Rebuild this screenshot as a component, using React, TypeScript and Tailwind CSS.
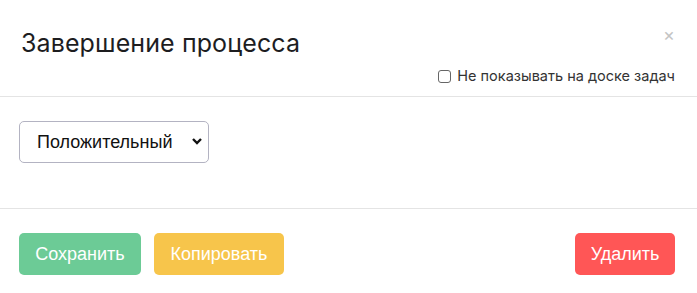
import { useState } from 'react'

export default function App() {
  const [hide, setHide] = useState(false)
  const [result, setResult] = useState('positive')

  return (
    <div className="w-[697px] h-[293px] bg-white font-['Inter',sans-serif] text-[#212529]">
      {/* Шапка */}
      <div className="h-[97px] border-b border-[#e4e4e4] pl-[21px] pr-[22px] pt-[25px]">
        <div className="flex items-start justify-between">
          <h2 className="text-[25px] leading-[36px] font-normal text-[#1d1d1f] tracking-[0.1px]">
            Завершение процесса
          </h2>
          <button className="mt-[1px] text-[18px] leading-none text-[#c4c4c4]">×</button>
        </div>
        <label className="mt-[5px] flex items-center justify-end gap-[6px] text-[14.5px] leading-[20px] text-[#333]">
          <input
            type="checkbox"
            checked={hide}
            onChange={(e) => setHide(e.target.checked)}
            className="h-[13px] w-[13px] appearance-none rounded-[3px] border border-[#666] bg-white"
          />
          Не показывать на доске задач
        </label>
      </div>

      {/* Тело */}
      <div className="h-[112px] border-b border-[#e4e4e4] px-[19px] pt-[24px]">
        <div className="relative w-[190px]">
          <select
            value={result}
            onChange={(e) => setResult(e.target.value)}
            className="h-[42px] w-full appearance-none rounded-[5px] border border-[#b3b3c2] bg-white pl-[17px] pr-[30px] font-['Liberation_Sans',Arial,sans-serif] text-[18px] text-[#111]"
          >
            <option value="positive">Положительный</option>
            <option value="negative">Отрицательный</option>
          </select>
          <svg
            className="pointer-events-none absolute right-[6px] top-[16px]"
            width="12"
            height="9"
            viewBox="0 0 12 9"
          >
            <path d="M2 2 L6 6 L10 2" fill="none" stroke="#111" strokeWidth="2.4" />
          </svg>
        </div>
      </div>

      {/* Кнопки */}
      <div className="flex items-center justify-between px-[19px] pt-[24px] font-['Liberation_Sans',Arial,sans-serif] text-[18px] text-white">
        <div className="flex gap-[13px]">
          <button className="h-[42px] w-[122px] rounded-[5px] bg-[#6ccb96]">Сохранить</button>
          <button className="h-[42px] w-[130px] rounded-[5px] bg-[#f7c54b]">Копировать</button>
        </div>
        <button className="mr-[3px] h-[42px] w-[100px] rounded-[5px] bg-[#ff5656]">Удалить</button>
      </div>
    </div>
  )
}
